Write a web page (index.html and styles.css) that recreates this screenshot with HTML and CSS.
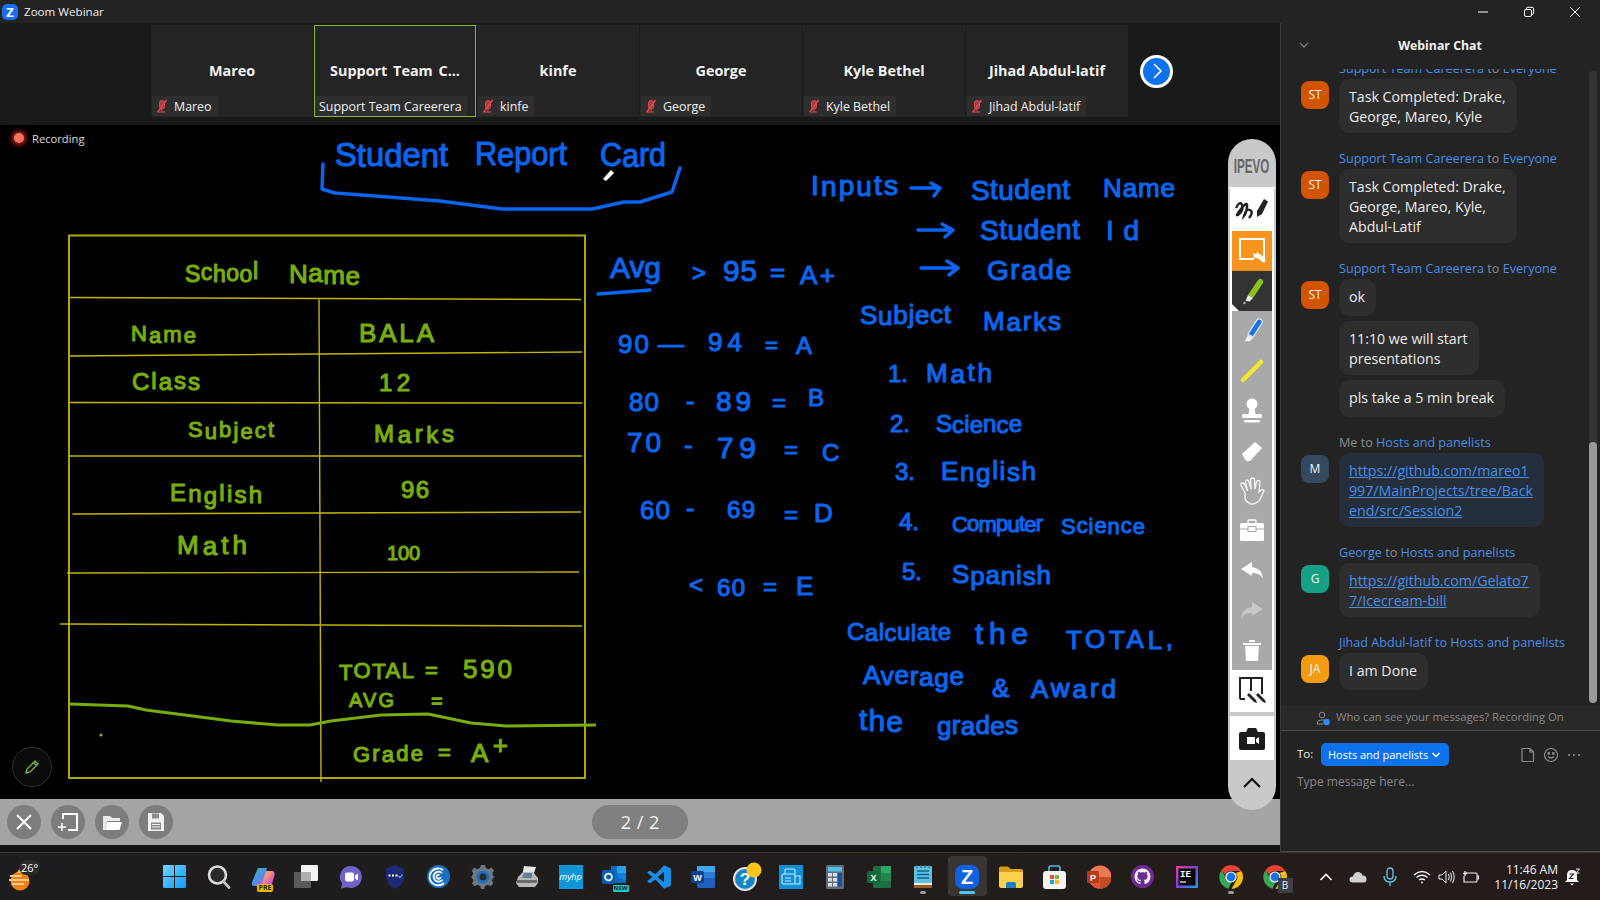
FILE: index.html
```html
<!DOCTYPE html>
<html lang="en">
<head>
<meta charset="utf-8">
<title>Zoom Webinar</title>
<link rel="stylesheet" href="styles.css">
</head>
<body>
<div class="window">
  <header class="titlebar">
    <div class="title-left">
      <span class="app-logo">Z</span>
      <span class="app-name">Zoom Webinar</span>
    </div>
    <div class="win-controls">
      <span class="win-btn"><svg width="12" height="12" viewBox="0 0 12 12"><path d="M1 6h10" stroke="#fff" stroke-width="1"/></svg></span>
      <span class="win-btn"><svg width="12" height="12" viewBox="0 0 12 12" fill="none" stroke="#fff"><rect x="1.5" y="3.5" width="7" height="7" rx="1.5"/><path d="M3.5 3V2.2q0-.9 1-.9h4.6q1.5 0 1.5 1.5v4.400q0 1-1 1H8.800"/></svg></span>
      <span class="win-btn"><svg width="12" height="12" viewBox="0 0 12 12"><path d="M1 1l10 10M11 1L1 11" stroke="#fff" stroke-width="1"/></svg></span>
    </div>
  </header>

  <div class="main">
    <section class="stage">
      <div class="strip">
        <div class="tile"><span class="tile-name">Mareo</span><span class="tile-label"><svg class="mute" viewBox="0 0 14 14"><path d="M7 1.5q2.500 0 2.500 2.500v3.500q0 2.500-2.500 2.500t-2.500-2.500V4q0-2.500 2.500-2.500zM7 10v2.500M4 13h6" fill="#a83a3f" stroke="#e0484f"/><path d="M11.500 1L2.500 13.500" stroke="#e0484f" stroke-width="1.500"/></svg>Mareo</span></div>
        <div class="tile tile-active"><span class="tile-name tile-name-spaced">Support Team C...</span><span class="tile-label tile-label-plain">Support Team Careerera</span></div>
        <div class="tile"><span class="tile-name">kinfe</span><span class="tile-label"><svg class="mute" viewBox="0 0 14 14"><path d="M7 1.5q2.500 0 2.500 2.500v3.500q0 2.500-2.500 2.500t-2.500-2.500V4q0-2.500 2.500-2.500zM7 10v2.500M4 13h6" fill="#a83a3f" stroke="#e0484f"/><path d="M11.500 1L2.500 13.500" stroke="#e0484f" stroke-width="1.500"/></svg>kinfe</span></div>
        <div class="tile"><span class="tile-name">George</span><span class="tile-label"><svg class="mute" viewBox="0 0 14 14"><path d="M7 1.5q2.500 0 2.500 2.500v3.500q0 2.500-2.500 2.500t-2.500-2.500V4q0-2.500 2.500-2.500zM7 10v2.500M4 13h6" fill="#a83a3f" stroke="#e0484f"/><path d="M11.500 1L2.500 13.500" stroke="#e0484f" stroke-width="1.500"/></svg>George</span></div>
        <div class="tile"><span class="tile-name">Kyle Bethel</span><span class="tile-label"><svg class="mute" viewBox="0 0 14 14"><path d="M7 1.5q2.500 0 2.500 2.500v3.500q0 2.500-2.500 2.500t-2.500-2.500V4q0-2.500 2.500-2.500zM7 10v2.500M4 13h6" fill="#a83a3f" stroke="#e0484f"/><path d="M11.500 1L2.500 13.500" stroke="#e0484f" stroke-width="1.500"/></svg>Kyle Bethel</span></div>
        <div class="tile"><span class="tile-name">Jihad Abdul-latif</span><span class="tile-label"><svg class="mute" viewBox="0 0 14 14"><path d="M7 1.5q2.500 0 2.500 2.500v3.500q0 2.500-2.500 2.500t-2.500-2.500V4q0-2.500 2.500-2.500zM7 10v2.500M4 13h6" fill="#a83a3f" stroke="#e0484f"/><path d="M11.500 1L2.500 13.500" stroke="#e0484f" stroke-width="1.500"/></svg>Jihad Abdul-latif</span></div>
        <button class="strip-next"><svg width="14" height="18" viewBox="0 0 14 18"><path d="M4 2l7 7-7 7" fill="none" stroke="#fff" stroke-width="1.600"/></svg></button>
      </div>

      <div class="board">
        <svg class="canvas" width="1280" height="674" viewBox="0 125 1280 674">
          <!-- table -->
          <g class="rule">
            <rect x="69" y="235.5" width="516" height="542.5" class="rule-box"/>
            <path d="M69 297.5L581 299.5M70 356L582 352M69 402.5L582.500 403M69 456H582M72.500 514L581 512M67 573L579 572M60 624L582 626M319 298.500L321 782"/>
          </g>
          <path class="stroke-green" d="M69 704L128 706L146 710L185 715L231 721L278 725H310L331 721L381 715L428 714L471 723L506 726L596 725"/>
          <circle cx="101" cy="735" r="1.500" class="dot-green"/>

          <!-- green writing -->
          <g class="ink green">
            <text class="f23" x="185" y="282" textLength="73" dy="0 -2 2 -1 1 -3">School</text>
            <text class="f26" x="289" y="283" textLength="71" dy="0 -1 2 1">Name</text>
            <text class="f22" x="131" y="341" textLength="65" dy="0 2 -1 1">Name</text>
            <text class="f26" x="359" y="342" textLength="75">BALA</text>
            <text class="f24" x="132" y="390" textLength="68" dy="0 -1 1 -1 1">Class</text>
            <text class="f24" x="379" y="391" textLength="31">12</text>
            <text class="f22" x="188" y="437" textLength="86" dy="0 2 -2 1 1 -1 -1">Subject</text>
            <text class="f24" x="374" y="442" textLength="80" dy="0 1 -1 1 -1">Marks</text>
            <text class="f24" x="170" y="501" textLength="92" dy="0 1 2 -3 1 1 0">English</text>
            <text class="f24" x="401" y="498" textLength="28">96</text>
            <text class="f26" x="177" y="554" textLength="70" dy="0 1 -1 0">Math</text>
            <text class="f20" x="387" y="560" textLength="33">100</text>
            <text class="f22" x="339" y="680" textLength="75" dy="0 -2 1 -1 0">TOTAL</text>
            <text class="f22" x="425" y="678">=</text>
            <text class="f26" x="463" y="678" textLength="49">590</text>
            <text class="f20" x="349" y="707" textLength="45">AVG</text>
            <text class="f20" x="431" y="708">=</text>
            <text class="f22" x="353" y="762" textLength="70" dy="0 -1 1 -1 0">Grade</text>
            <text class="f22" x="438" y="760">=</text>
            <text class="f26" x="471" y="762" textLength="37" dy="0 -8">A+</text>
          </g>

          <!-- blue writing -->
          <g class="ink blue">
            <text class="f34" x="335" y="166" textLength="113" lengthAdjust="spacingAndGlyphs" dy="0 1 -1 1 -1 1 -1">Student</text>
            <text class="f34" x="475" y="165" textLength="92" lengthAdjust="spacingAndGlyphs" dy="0 1 -1 0 1 -1">Report</text>
            <text class="f34" x="600" y="166" textLength="66" lengthAdjust="spacingAndGlyphs" dy="0 1 -1 0">Card</text>

            <text class="f28" x="811" y="195" textLength="87" dy="0 1 -1 1 -1 0">Inputs</text>
            <text class="f28" x="971" y="200" textLength="99" dy="0 -1 1 -1 1 -1 0">Student</text>
            <text class="f26" x="1103" y="197" textLength="72">Name</text>
            <text class="f28" x="980" y="240" textLength="100" dy="0 -1 1 -1 1 -1 0">Student</text>
            <text class="f28" x="1106" y="240" textLength="33">Id</text>
            <text class="f28" x="987" y="280" textLength="84" dy="0 -1 1 -1 1">Grade</text>
            <text class="f26" x="860" y="324" textLength="91" dy="0 1 -1 -1 1 -1 0">Subject</text>
            <text class="f26" x="983" y="330" textLength="78" dy="0 1 -1 1 -1">Marks</text>
            <text class="f24" x="888" y="382">1.</text>
            <text class="f26" x="926" y="382" textLength="66" dy="0 1 -2 1">Math</text>
            <text class="f24" x="890" y="432">2.</text>
            <text class="f24" x="936" y="432" textLength="86" dy="0 1 -1 1 -1 1 -1">Science</text>
            <text class="f24" x="895" y="480">3.</text>
            <text class="f26" x="941" y="480" textLength="95" dy="0 1 1 -3 1 1 -1">English</text>
            <text class="f24" x="899" y="530">4.</text>
            <text class="f22" x="952" y="532" textLength="91" dy="0 -1 1 -1 1 -1 1 -1">Computer</text>
            <text class="f22" x="1061" y="534" textLength="84" dy="0 -1 1 -1 1 -1 1">Science</text>
            <text class="f24" x="902" y="580">5.</text>
            <text class="f26" x="952" y="583" textLength="99" dy="0 2 -1 1 -1 1 -1">Spanish</text>
            <text class="f24" x="847" y="640" textLength="104" dy="0 1 -1 1 -1 1 -1 1 -1">Calculate</text>
            <text class="f30" x="975" y="644" textLength="53">the</text>
            <text class="f26" x="1066" y="649" textLength="107" dy="0 -1 1 -1 1 -2">TOTAL,</text>
            <text class="f26" x="863" y="684" textLength="101" dy="0 1 -1 1 1 1 -2">Average</text>
            <text class="f26" x="992" y="697">&amp;</text>
            <text class="f26" x="1031" y="698" textLength="85" dy="0 -1 1 -1 1">Award</text>
            <text class="f30" x="859" y="730" textLength="44" dy="0 1 1">the</text>
            <text class="f26" x="937" y="735" textLength="81" dy="0 -1 1 -1 1 -1">grades</text>

            <text class="f30" x="610" y="278" textLength="51" dy="0 -1 1">Avg</text>
            <text class="f24" x="692" y="281">&gt;</text>
            <text class="f30" x="723" y="281" textLength="34">95</text>
            <text class="f26" x="770" y="281">=</text>
            <text class="f26" x="800" y="284" textLength="35">A+</text>

            <text class="f26" x="618" y="353" textLength="31">90</text>
            <text class="f26" x="658" y="353" textLength="23">—</text>
            <text class="f26" x="708" y="351" textLength="34">94</text>
            <text class="f22" x="765" y="353">=</text>
            <text class="f24" x="796" y="354">A</text>

            <text class="f26" x="629" y="411" textLength="30">80</text>
            <text class="f26" x="686" y="410" textLength="12">-</text>
            <text class="f28" x="716" y="411" textLength="35">89</text>
            <text class="f24" x="772" y="411">=</text>
            <text class="f24" x="808" y="406">B</text>

            <text class="f28" x="627" y="452" textLength="34">70</text>
            <text class="f26" x="684" y="454" textLength="10">-</text>
            <text class="f30" x="717" y="458" textLength="39">79</text>
            <text class="f24" x="784" y="458">=</text>
            <text class="f24" x="822" y="461">C</text>

            <text class="f26" x="640" y="519" textLength="30">60</text>
            <text class="f26" x="686" y="517" textLength="12">-</text>
            <text class="f24" x="727" y="518" textLength="28">69</text>
            <text class="f24" x="784" y="523">=</text>
            <text class="f26" x="814" y="522">D</text>

            <text class="f24" x="689" y="593">&lt;</text>
            <text class="f24" x="717" y="596" textLength="28">60</text>
            <text class="f24" x="763" y="595">=</text>
            <text class="f26" x="796" y="595">E</text>
          </g>

          <!-- blue strokes -->
          <g class="stroke-blue">
            <path d="M323 164L322 189L335 193L388 197L440 201L502 209H592L624 202L640 202L672 192L680 168"/>
            <path d="M598 294L650 290"/>
            <path d="M911 188H938M931 183L940 188L934 196"/>
            <path d="M918 230H950M942 224L953 230L945 237"/>
            <path d="M921 268H955M947 261L958 268L949 275"/>
          </g>
          <path class="cursor-pen" d="M603 179l8-9 3 3-8 8z"/>
        </svg>

        <div class="rec"><span class="rec-dot"></span><span class="rec-text">Recording</span></div>
        <button class="pen-fab"><svg width="18" height="18" viewBox="0 0 18 18" fill="none" stroke="#6fbf3a" stroke-width="1.300"><path d="M3 15l1-4 8-8 3 3-8 8zM10.500 4.500l3 3"/></svg></button>
      </div>

      <div class="controlbar">
        <button class="round-btn"><svg width="20" height="20" viewBox="0 0 20 20"><path d="M3 3l14 14M17 3L3 17" stroke="#fff" stroke-width="2"/></svg></button>
        <button class="round-btn"><svg width="22" height="22" viewBox="0 0 22 22" fill="none" stroke="#fff" stroke-width="2"><path d="M6 8V3h14v16h-9"/><path d="M5 12v8M1 16h8" stroke-width="1.500"/></svg></button>
        <button class="round-btn"><svg width="22" height="22" viewBox="0 0 22 22"><path d="M2 5h7l2 2h8v3H6l-2 9H2z" fill="#e9e9e9"/><path d="M6 11h15l-2.500 8H4z" fill="#fff"/></svg></button>
        <button class="round-btn"><svg width="20" height="20" viewBox="0 0 20 20"><path d="M2 1h13l3 3v15H2z" fill="#f2f2f2"/><path d="M6 1.500h7v5H6z" fill="#8a8a8a"/><path d="M5 10.500h10v7H5z" fill="#8a8a8a"/><path d="M6 12.500h8M6 15h8" stroke="#f2f2f2"/></svg></button>
        <span class="page-pill">2 / 2</span>
      </div>

      <aside class="ipevo">
        <div class="ipevo-head"><span class="ipevo-logo">IPEVO</span></div>
        <div class="ipevo-body">
          <div class="tool tool-white tool-42"><svg width="36" height="30" viewBox="0 0 36 30"><path d="M2 13q4-8 6-3t-3 9 2-5 6-2-3 9q2-8 6-6t-1 8" fill="none" stroke="#222" stroke-width="2.400"/><path d="M23 16L30 4l4 2.500L28 19l-5 3z" fill="#222"/></svg></div>
          <div class="tool tool-orange"><svg width="30" height="30" viewBox="0 0 30 30"><path d="M3 24V3h24v21" fill="none" stroke="#fff" stroke-width="2"/><path d="M3 23h14" stroke="#fff" stroke-width="2"/><path d="M18 19l2-3 8 6-2 3z" fill="#fff"/><path d="M18 18l-2-1 1 5 3 0 7 5 2-3z" fill="#fff"/></svg></div>
          <div class="tool tool-dark"><svg width="30" height="32" viewBox="0 0 30 32"><path d="M11 20L21 5q2-2 4-.5t1 3.500L16 23z" fill="#8cc220"/><path d="M11 20l5 3-3.500 3.500-4-.5z" fill="#e9e9e9"/><path d="M7 26.500l2 1.500-3 1.500z" fill="#ccc"/></svg><span class="corner-mark"></span></div>
          <div class="tool-gray">
            <div class="tool"><svg width="30" height="32" viewBox="0 0 30 32"><path d="M11 19L20 5q2-2 4-.5t1 3.500L16 22z" fill="#1774e8" stroke="#dfe6ff" stroke-width="1.300"/><path d="M11 20l5 3-3.500 3.500-4-.5-1.500 2z" fill="#eee"/></svg></div>
            <div class="tool"><svg width="30" height="30" viewBox="0 0 30 30"><path d="M6 24L24 6" stroke="#f3e82a" stroke-width="4.500" stroke-linecap="round"/></svg></div>
            <div class="tool"><svg width="28" height="30" viewBox="0 0 28 30" fill="#fff"><circle cx="14" cy="8" r="5.500"/><path d="M11.500 12h5l1 6h-7z"/><rect x="4" y="18" width="20" height="4" rx="1.500"/><rect x="6" y="24" width="16" height="2.500" rx="1"/></svg></div>
            <div class="tool"><svg width="28" height="28" viewBox="0 0 28 28" fill="#fff"><path d="M4 17L17 5l7 6-12 13H8z"/></svg></div>
            <div class="tool"><svg width="28" height="30" viewBox="0 0 28 30" fill="none" stroke="#f5f5f5" stroke-width="1.300"><path d="M7 17L3 9q-.5-2 1.500-2t3 3l2 5L7.500 6q0-2 1.500-2t2 2l2 7L12.500 4q0-2 2-2t2 2l.5 9 1.500-7q.5-1.500 2-1.500t1.500 2L21 16l2-2q2-1 3 .5l-3 7q-1 3-4 5t-6 1.500q-4-1-6-5z"/></svg></div>
            <div class="tool"><svg width="26" height="24" viewBox="0 0 26 24"><path d="M9 5V3q0-1 1-1h6q1 0 1 1v2" fill="none" stroke="#fff" stroke-width="1.500"/><rect x="1" y="5" width="24" height="18" rx="1.500" fill="#fff"/><path d="M1 11h24" stroke="#aaa"/><rect x="9" y="8.500" width="8" height="5" fill="#fff" stroke="#aaa"/></svg></div>
            <div class="tool"><svg width="24" height="20" viewBox="0 0 24 20"><path d="M1 9l11-7v5q10 1 11 12-3-7-11-6v3z" fill="#fff"/></svg></div>
            <div class="tool"><svg width="24" height="20" viewBox="0 0 24 20"><path d="M23 9L12 2v5Q2 8 1 19q3-7 11-6v3z" fill="#c8c8c8"/></svg></div>
            <div class="tool"><svg width="20" height="24" viewBox="0 0 20 24" fill="#fff"><path d="M1 5h18v2H1zM7 2h6v2H7zM3 8h14l-1 15H4z"/></svg></div>
          </div>
          <div class="tool tool-white tool-42"><svg width="32" height="32" viewBox="0 0 32 32"><path d="M4 24V3h22v16M15 3v13" fill="none" stroke="#222" stroke-width="2"/><path d="M4 24h5" fill="none" stroke="#222" stroke-width="2"/><path d="M11 20l2-2 7 7 1 3-3-1z" fill="#222"/><path d="M20 20l2-2 7 7 1 3-3-1z" fill="#222"/></svg></div>
          <div class="ipevo-sep"></div>
          <div class="tool tool-white tool-44"><svg width="28" height="24" viewBox="0 0 28 24"><path d="M1 8q0-2 2-2h5l2-4h8l2 4h5q2 0 2 2v14q0 2-2 2H3q-2 0-2-2z" fill="#1c1c1c"/><rect x="9" y="11" width="8" height="7" fill="#fff"/><path d="M18 13l3-2v7l-3-2z" fill="#fff"/></svg></div>
        </div>
        <div class="ipevo-foot"><svg width="20" height="12" viewBox="0 0 20 12"><path d="M2 10l8-8 8 8" fill="none" stroke="#111" stroke-width="2.200"/></svg></div>
      </aside>

      <div class="band"></div>
    </section>

    <aside class="chat">
      <div class="chat-head">
        <svg class="chat-caret" width="10" height="8" viewBox="0 0 10 8"><path d="M1 2l4 4 4-4" fill="none" stroke="#777" stroke-width="1.300"/></svg>
        <span class="chat-title">Webinar Chat</span>
      </div>
      <div class="chat-scroll">
        <div class="chat-list">
          <div class="msg msg-first">
            <div class="msg-from"><a>Support Team Careerera</a> <span>to</span> <a>Everyone</a></div>
            <div class="avatar av-orange">ST</div>
            <div class="bubbles"><div class="bubble">Task Completed: Drake,<br>George, Mareo, Kyle</div></div>
          </div>
          <div class="msg">
            <div class="msg-from"><a>Support Team Careerera</a> <span>to</span> <a>Everyone</a></div>
            <div class="avatar av-orange">ST</div>
            <div class="bubbles"><div class="bubble">Task Completed: Drake,<br>George, Mareo, Kyle,<br>Abdul-Latif</div></div>
          </div>
          <div class="msg">
            <div class="msg-from"><a>Support Team Careerera</a> <span>to</span> <a>Everyone</a></div>
            <div class="avatar av-orange">ST</div>
            <div class="bubbles">
              <div class="bubble">ok</div>
              <div class="bubble">11:10 we will start<br>presentations</div>
              <div class="bubble">pls take a 5 min break</div>
            </div>
          </div>
          <div class="msg">
            <div class="msg-from"><span>Me to</span> <a>Hosts and panelists</a></div>
            <div class="avatar av-slate">M</div>
            <div class="bubbles"><div class="bubble bubble-me"><a class="link">https://github.com/mareo1<br>997/MainProjects/tree/Back<br>end/src/Session2</a></div></div>
          </div>
          <div class="msg">
            <div class="msg-from"><a>George</a> <span>to</span> <a>Hosts and panelists</a></div>
            <div class="avatar av-teal">G</div>
            <div class="bubbles"><div class="bubble"><a class="link">https://github.com/Gelato7<br>7/Icecream-bill</a></div></div>
          </div>
          <div class="msg">
            <div class="msg-from"><a>Jihad Abdul-latif to Hosts and panelists</a></div>
            <div class="avatar av-amber">JA</div>
            <div class="bubbles"><div class="bubble">I am Done</div></div>
          </div>
        </div>
        <div class="scrollbar"><span class="scroll-thumb"></span></div>
      </div>
      <div class="notice">
        <svg width="15" height="15" viewBox="0 0 15 15"><circle cx="6" cy="4" r="2.800" fill="none" stroke="#8a8a8a"/><path d="M1 13q0-4 4-4h3" fill="none" stroke="#8a8a8a"/><path d="M1 13h6" stroke="#8a8a8a"/><circle cx="10.500" cy="11" r="3.200" fill="#2d8cff"/></svg>
        <span class="notice-text">Who can see your messages? Recording On</span>
      </div>
      <div class="composer">
        <div class="to-row">
          <span class="to-label">To:</span>
          <button class="to-btn">Hosts and panelists<svg width="10" height="8" viewBox="0 0 10 8"><path d="M1.500 2l3.500 3.500L8.500 2" fill="none" stroke="#fff" stroke-width="1.500"/></svg></button>
          <div class="to-icons">
            <svg width="16" height="16" viewBox="0 0 16 16" fill="none" stroke="#8d8d8d" stroke-width="1.200"><path d="M3 1.500h7L13.500 5v8.500q0 1-1 1h-9.500q-1 0-1-1v-11q0-1 1-1zM10 1.500V5h3.500"/></svg>
            <svg width="16" height="16" viewBox="0 0 16 16" fill="none" stroke="#8d8d8d" stroke-width="1.200"><circle cx="8" cy="8" r="6.500"/><circle cx="5.700" cy="6.500" r=".8" fill="#8d8d8d"/><circle cx="10.300" cy="6.500" r=".8" fill="#8d8d8d"/><path d="M5 9.500q3 3 6 0"/></svg>
            <svg width="16" height="16" viewBox="0 0 16 16" fill="#8d8d8d"><circle cx="3" cy="8" r="1"/><circle cx="8" cy="8" r="1"/><circle cx="13" cy="8" r="1"/></svg>
          </div>
        </div>
        <div class="placeholder">Type message here...</div>
      </div>
    </aside>
  </div>
</div>

<footer class="taskbar">
  <div class="weather">
    <svg width="26" height="26" viewBox="0 0 26 26"><circle cx="11" cy="16" r="9.500" fill="#f0820f"/><path d="M11 2l3 6H8z" fill="#f6b73c"/><path d="M1 11h12M0 15h20M3 19h12" stroke="#f5c98a" stroke-width="2.200"/></svg>
    <span class="temp">26°</span>
  </div>
  <div class="apps">
    <span class="app"><svg width="23" height="23" viewBox="0 0 23 23"><defs><linearGradient id="wg" x1="0" y1="0" x2="1" y2="1"><stop offset="0" stop-color="#6fd3ff"/><stop offset="1" stop-color="#0f9bff"/></linearGradient></defs><path fill="url(#wg)" d="M1 0h10v11H0V1q0-1 1-1zM12 0h10q1 0 1 1v10H12zM0 12h11v11H1q-1 0-1-1zM12 12h11v10q0 1-1 1H12z"/></svg></span>
    <span class="app"><svg width="24" height="24" viewBox="0 0 24 24"><circle cx="10.500" cy="10" r="8.500" fill="#2a2a2a" stroke="#dcdcdc" stroke-width="2.600"/><path d="M16.500 16.500l5.500 6" stroke="#c8c8c8" stroke-width="2.600" stroke-linecap="round"/></svg></span>
    <span class="app app-badged"><svg width="24" height="20" viewBox="0 0 24 20"><defs><linearGradient id="cg" x1="0" y1="0" x2="1" y2="1"><stop offset="0" stop-color="#3bc78b"/><stop offset=".5" stop-color="#4a90f0"/><stop offset="1" stop-color="#d552c8"/></linearGradient><linearGradient id="cg2" x1="0" y1="0" x2="1" y2="1"><stop offset="0" stop-color="#f7d23a"/><stop offset=".6" stop-color="#e86aa5"/><stop offset="1" stop-color="#8a54e8"/></linearGradient></defs><path fill="url(#cg)" d="M7 1h9l-5 18H3q-3 0-2-4z"/><path fill="url(#cg2)" d="M15 4h6q3 0 2.500 4L21 17q-.5 2-3 2h-8z"/></svg><span class="badge badge-pre">PRE</span></span>
    <span class="app"><svg width="25" height="24" viewBox="0 0 25 24"><rect x="7" y="0" width="17" height="16" rx="1" fill="#f4f4f4"/><rect x="0" y="7" width="17" height="16" rx="1" fill="#5a5a5a"/><rect x="7" y="7" width="10" height="9" fill="#b0b0b0"/></svg></span>
    <span class="app"><svg width="24" height="24" viewBox="0 0 24 24"><path d="M12 1a11 11 0 11-4 21.300L2 23.500l1-5A11 11 0 0112 1z" fill="#6f62c8"/><rect x="6" y="7.500" width="9" height="9" rx="2" fill="#fff"/><path d="M16 10.500l3-2v7l-3-2z" fill="#fff"/></svg></span>
    <span class="app"><svg width="20" height="24" viewBox="0 0 20 24"><path d="M10 0l9 3.500V12q0 7-9 12-9-5-9-12V3.500z" fill="#1b2a72"/><path d="M3.500 10.500h2M7 10.500h2M10.500 10.500h2" stroke="#fff" stroke-width="1.800"/><path d="M13.500 11l1.500 1.500 2.500-3" fill="none" stroke="#6fb8ff" stroke-width="1.100"/></svg></span>
    <span class="app"><svg width="23" height="23" viewBox="0 0 23 23"><circle cx="11.500" cy="11.500" r="11.500" fill="#1d6fc2"/><g fill="none" stroke="#fff" stroke-width="1.800"><path d="M17 18a8.500 8.500 0 11-1-13"/><path d="M15.500 14.800A5 5 0 1115 8"/><path d="M13.500 12a2 2 0 11-1-2"/></g></svg></span>
    <span class="app"><svg width="24" height="24" viewBox="0 0 24 24"><path d="M10 0h4l.8 3 2.800 1.200 2.700-1.600 2.800 2.800-1.600 2.700L22 11l2 1-2 1-1.200 2.800 1.600 2.700-2.800 2.800-2.700-1.600-2.800 1.200-.9 3H10l-.8-3-2.800-1.200-2.700 1.600-2.800-2.800 1.600-2.700L1 13 0 12l1-1 1.200-2.800L.6 5.400l2.800-2.800 2.700 1.600L9 3z" fill="#6d7882"/><circle cx="12" cy="12" r="6.500" fill="#1d6fc2"/><circle cx="12" cy="12" r="3.500" fill="#2b2b2b"/></svg></span>
    <span class="app"><svg width="24" height="24" viewBox="0 0 24 24"><path d="M9 1l12 1-3 9H7z" fill="#e4e4e4"/><path d="M3 12l5-5h10l5 6v5l-3 4H4l-3-4z" fill="#b8b8b8"/><path d="M2 15h20v3H2z" fill="#6a6a6a"/><path d="M9 8h8v5H7z" fill="#5d7f99"/></svg></span>
    <span class="app"><span class="tile-hp">myhp</span></span>
    <span class="app app-badged"><svg width="25" height="22" viewBox="0 0 25 22"><path d="M9 0h10q5 0 5 5v12H9z" fill="#0a6cc4"/><path d="M15 0h9v7h-9z" fill="#2aa0e8"/><path d="M16 7h8v8l-8-4z" fill="#0f87d8"/><rect x="0" y="4" width="13" height="14" rx="2" fill="#0a5db0"/><circle cx="6.500" cy="11" r="3.400" fill="none" stroke="#fff" stroke-width="1.800"/></svg><span class="badge badge-new">NEW</span></span>
    <span class="app"><svg width="24" height="24" viewBox="0 0 100 100"><path d="M71 99l25-12a7 7 0 004-7V20a7 7 0 00-4-7L71 1 35 40 13 24l-9 4a4 4 0 000 7l19 15L4 65a4 4 0 000 7l9 4 22-16z" fill="#1a8ee6"/><path d="M71 28L44 50l27 22z" fill="#211f1f"/></svg></span>
    <span class="app"><svg width="24" height="24" viewBox="0 0 24 24"><rect x="6" y="1" width="18" height="22" rx="1.500" fill="#1f5fbf"/><path d="M6 1h18v6H6z" fill="#41a5ee"/><path d="M6 7h18v6H6z" fill="#2b7cd3"/><rect x="0" y="6" width="13" height="12" rx="1.500" fill="#103f91"/><text class="glyph-w" x="6.500" y="15.500">W</text></svg></span>
    <span class="app"><svg width="30" height="30" viewBox="0 0 30 30"><circle cx="13" cy="17" r="11" fill="#1287c8" stroke="#e4e4e4" stroke-width="2"/><text class="glyph-q" x="13" y="23">?</text><circle cx="22" cy="8" r="7.500" fill="#fcc419"/></svg></span>
    <span class="app"><svg width="24" height="24" viewBox="0 0 24 24"><rect width="24" height="24" fill="#0e8fd6"/><g fill="none" stroke="#cfeaff" stroke-width="1.100"><rect x="3" y="9" width="13" height="10" rx="1.500"/><path d="M6 9V5q0-1 1-1h8q1 0 1 1v4M16 11h5v8h-5M6 13h6M6 16h6"/></g></svg></span>
    <span class="app"><svg width="18" height="24" viewBox="0 0 18 24"><rect width="18" height="24" rx="1.500" fill="#5f6d7a"/><rect x="2" y="2" width="14" height="4.500" fill="#4fc4e8"/><g fill="#d9dde0"><rect x="2" y="8" width="4" height="3.500"/><rect x="7" y="8" width="4" height="3.500"/><rect x="2" y="13" width="4" height="3.500"/><rect x="7" y="13" width="4" height="3.500"/><rect x="2" y="18" width="4" height="3.500"/><rect x="7" y="18" width="4" height="3.500"/></g><rect x="12" y="8" width="4" height="13.500" fill="#1d4f9c"/></svg></span>
    <span class="app"><svg width="24" height="24" viewBox="0 0 24 24"><rect x="6" y="1" width="18" height="22" rx="1.500" fill="#1d6f42"/><path d="M14 1h10v7H14z" fill="#33a56a"/><path d="M14 8h10v8H14z" fill="#21874f"/><rect x="0" y="6" width="13" height="12" rx="1.500" fill="#0f6b3b"/><text class="glyph-w" x="6.500" y="15.500">X</text></svg></span>
    <span class="app app-pip"><svg width="18" height="24" viewBox="0 0 18 24"><rect y="1" width="18" height="22" rx="1" fill="#5cc0e0"/><path d="M0 20h18v3H0z" fill="#9a5a1e"/><path d="M0 18h18v2H0z" fill="#f2e9d5"/><path d="M3 6h12M3 9.500h12M3 13h12" stroke="#145f85" stroke-width="1.500"/><path d="M3 0v3M7 0v3M11 0v3M15 0v3" stroke="#2a6c90" stroke-width="1.200"/></svg><span class="pip"></span></span>
    <span class="app app-active"><svg width="24" height="24" viewBox="0 0 24 24"><rect width="24" height="24" rx="8" fill="#1261e0"/><text class="glyph-z" x="12" y="18.500">Z</text></svg><span class="pip pip-active"></span></span>
    <span class="app"><svg width="24" height="22" viewBox="0 0 24 22"><path d="M0 2q0-1.500 1.500-1.500H9l2.500 2.500h11Q24 3 24 4.500V8H0z" fill="#d79c16"/><path d="M0 6h24v14q0 2-2 2H2q-2 0-2-2z" fill="#fbd04e"/><path d="M7 18q0-2 2-2h6q2 0 2 2v4H7z" fill="#1d7fc4"/></svg></span>
    <span class="app"><svg width="23" height="24" viewBox="0 0 23 24"><path d="M6 7V3q0-2 2-2h7q2 0 2 2v4" fill="none" stroke="#4fc0e8" stroke-width="1.600"/><rect y="6" width="23" height="18" rx="3" fill="#f4f4f4"/><rect x="7" y="10" width="4" height="4" fill="#e8532b"/><rect x="12" y="10" width="4" height="4" fill="#7cb82f"/><rect x="7" y="15" width="4" height="4" fill="#1fa0e8"/><rect x="12" y="15" width="4" height="4" fill="#fbb91f"/></svg></span>
    <span class="app"><svg width="24" height="24" viewBox="0 0 24 24"><circle cx="13" cy="12" r="11.500" fill="#ee7a55"/><path d="M13 12H24.500A11.500 11.500 0 0113 23.500z" fill="#c64a24"/><path d="M13 12v11.500A11.500 11.500 0 011.500 12z" fill="#d9582f"/><rect x="0" y="6" width="12" height="12" rx="1.500" fill="#b93a18"/><text class="glyph-w" x="6" y="15.500">P</text></svg></span>
    <span class="app"><svg width="23" height="23" viewBox="0 0 23 23"><circle cx="11.500" cy="11.500" r="11.500" fill="#6e2b93"/><g transform="translate(3.500 3.500)"><path fill="#f2f2f2" d="M8 0C3.580 0 0 3.580 0 8c0 3.540 2.290 6.530 5.470 7.590.4.070.55-.17.55-.38 0-.19-.01-.82-.01-1.490-2.010.37-2.530-.49-2.690-.94-.09-.23-.48-.94-.82-1.130-.28-.15-.68-.52-.01-.53.63-.01 1.080.58 1.230.82.720 1.210 1.870.87 2.330.66.070-.52.280-.87.510-1.070-1.780-.2-3.640-.89-3.640-3.950 0-.87.310-1.590.820-2.150-.08-.2-.36-1.020.080-2.120 0 0 .67-.21 2.200.82.640-.18 1.320-.27 2-.27s1.360.09 2 .27c1.530-1.040 2.200-.82 2.200-.82.440 1.100.160 1.920.080 2.120.510.560.820 1.270.820 2.150 0 3.070-1.870 3.750-3.650 3.950.290.25.540.730.540 1.480 0 1.070-.01 1.930-.01 2.200 0 .21.150.46.550.38A8.013 8.013 0 0016 8c0-4.420-3.580-8-8-8z"/></g></svg></span>
    <span class="app"><svg width="22" height="22" viewBox="0 0 22 22"><defs><linearGradient id="ig" x1="0" y1="0" x2="1" y2="1"><stop offset="0" stop-color="#f0389a"/><stop offset=".5" stop-color="#7a42e0"/><stop offset="1" stop-color="#10a4f0"/></linearGradient></defs><rect width="22" height="22" fill="url(#ig)"/><rect x="2.500" y="2.500" width="17" height="17" fill="#0a0a0a"/><text class="glyph-ie" x="4" y="11">IE</text><path d="M4 16h6" stroke="#fff" stroke-width="1.200"/></svg></span>
    <span class="app app-pip"><svg class="chrome" width="24" height="24" viewBox="0 0 24 24"><path d="M12 0a12 12 0 0110.400 6H12a6 6 0 00-5.700 4L2.400 5.200A12 12 0 0112 0z" fill="#e94335"/><path d="M22.400 6A12 12 0 0112.500 24l4.700-8.500A6 6 0 0016.500 8z" fill="#fbbc05"/><path d="M2.400 5.200l4.900 8.400a6 6 0 005.200 3.400L9.500 23.700A12 12 0 012.400 5.200z" fill="#34a853"/><circle cx="12" cy="12" r="5.600" fill="#fff"/><circle cx="12" cy="12" r="4.400" fill="#1a73e8"/></svg><span class="pip"></span></span>
    <span class="app app-badged"><svg class="chrome" width="24" height="24" viewBox="0 0 24 24"><path d="M12 0a12 12 0 0110.400 6H12a6 6 0 00-5.700 4L2.400 5.200A12 12 0 0112 0z" fill="#e94335"/><path d="M22.400 6A12 12 0 0112.500 24l4.700-8.500A6 6 0 0016.500 8z" fill="#fbbc05"/><path d="M2.400 5.200l4.900 8.400a6 6 0 005.200 3.400L9.500 23.700A12 12 0 012.400 5.200z" fill="#34a853"/><circle cx="12" cy="12" r="5.600" fill="#fff"/><circle cx="12" cy="12" r="4.400" fill="#1a73e8"/></svg><span class="badge badge-b">B</span></span>
  </div>
  <div class="tray">
    <span class="tray-item"><svg width="14" height="10" viewBox="0 0 14 10"><path d="M1.500 8L7 2.500 12.500 8" fill="none" stroke="#fff" stroke-width="1.600"/></svg></span>
    <span class="tray-item tray-gap"><svg width="18" height="12" viewBox="0 0 18 12"><path d="M4 11.500q-3.500 0-3.500-3T4 5.500Q5 1 9 1q3.500 0 4.500 3.500 4-.5 4 3.500t-3.500 3.500z" fill="#d0d0d0"/></svg></span>
    <span class="tray-item tray-gap"><svg width="14" height="20" viewBox="0 0 14 20" fill="none" stroke="#63c8e8" stroke-width="1.300"><rect x="4" y="1" width="6" height="11" rx="3"/><path d="M1 9q0 6 6 6t6-6M7 15v4"/></svg></span>
    <span class="tray-item tray-gap"><svg width="18" height="14" viewBox="0 0 18 14" fill="none" stroke="#f2f2f2" stroke-width="1.300"><path d="M1 5q8-7 16 0M3.500 7.500q5.500-4.500 11 0M6 10q3-2 6 0"/><circle cx="9" cy="12.500" r="1" fill="#f2f2f2" stroke="none"/></svg></span>
    <span class="tray-item"><svg width="17" height="14" viewBox="0 0 17 14" fill="none" stroke="#f2f2f2" stroke-width="1"><path d="M1 5h3l4-4v12L4 9H1zM10.500 4q1.500 3 0 6M12.500 2.500q2.500 4.500 0 9M14.500 1q3.500 6 0 12"/></svg></span>
    <span class="tray-item"><svg width="17" height="14" viewBox="0 0 17 14" fill="none" stroke="#f2f2f2" stroke-width="1.100"><path d="M4 3h10q1 0 1 1v7q0 1-1 1H2V6M15 6h1.500v3H15"/><path d="M3 1v5M1 3.500h4" stroke-width="1.300"/></svg></span>
    <div class="clock"><span>11:46 AM</span><span>11/16/2023</span></div>
    <span class="tray-bell"><svg width="18" height="18" viewBox="0 0 18 18"><path d="M8 2q5 0 5 5v5l2 2H1l2-2V7q0-5 5-5z" fill="#f2f2f2"/><path d="M6 15.500h4l-2 2z" fill="#f2f2f2"/><path d="M5.500 6h4l-4 4.500h4" fill="none" stroke="#222" stroke-width="1.100"/><path d="M12 1h3.500L12 5h3.500" fill="none" stroke="#f2f2f2" stroke-width="1"/></svg></span>
  </div>
</footer>
</body>
</html>
```

FILE: styles.css
```css
* { box-sizing: border-box; }
html, body { margin: 0; padding: 0; }
body {
  width: 1600px;
  height: 900px;
  overflow: hidden;
  display: flex;
  flex-direction: column;
  background: #000;
  font-family: "Open Sans", "Noto Sans", "Liberation Sans", sans-serif;
  color: #fff;
}
button { border: 0; padding: 0; font: inherit; color: inherit; }
svg { display: block; }

.window { flex: 0 0 852px; display: flex; flex-direction: column; min-height: 0; }

/* title bar */
.titlebar {
  flex: 0 0 23px;
  background: #232323;
  display: flex;
  align-items: center;
  justify-content: space-between;
  padding-right: 2px;
}
.title-left { display: flex; align-items: center; padding-left: 2px; }
.app-logo {
  width: 16px; height: 16px;
  border-radius: 5px;
  background: #1a6ff0;
  font-size: 13px; font-weight: 700; line-height: 16px;
  text-align: center;
  margin-right: 6px;
}
.app-name { font-size: 11.600px; color: #eee; }
.win-controls { display: flex; }
.win-btn { width: 46px; height: 20px; display: flex; align-items: center; justify-content: center; }

.main { flex: 1; display: flex; min-height: 0; }

/* stage */
.stage { position: relative; flex: 0 0 1280px; display: flex; flex-direction: column; }
.strip {
  flex: 0 0 102px;
  background: #1a1a1a;
  display: flex;
  gap: 1px;
  padding: 2px 0 8px 151px;
}
.tile { position: relative; width: 162px; background: #242424; display: flex; align-items: center; justify-content: center; padding-bottom: 2px; }
.tile-active { border: 1px solid #8fb52c; }
.tile-name { font-size: 14.400px; font-weight: 700; color: #f2f2f2; }
.tile-name-spaced { word-spacing: 2px; }
.tile-label {
  position: absolute;
  left: 1px; bottom: 1px;
  height: 20px;
  padding: 0 6px 0 3px;
  display: flex; align-items: center;
  background: #2e2e2e;
  font-size: 12.400px;
  color: #f0f0f0;
  white-space: nowrap;
}
.tile-label-plain { left: 0; bottom: 0; padding: 0 5px 0 4px; }
.mute { width: 14px; height: 14px; margin-right: 5px; }
.strip-next {
  align-self: center;
  margin: 0 0 0 11px;
  width: 33px; height: 33px;
  border-radius: 50%;
  background: #0e72ed;
  border: 3px solid #fff;
  display: flex; align-items: center; justify-content: center;
}

/* whiteboard */
.board { position: relative; flex: 0 0 674px; background: #000; }
.canvas { display: block; }
.rule { fill: none; stroke: #c4b400; stroke-width: 1.400; }
.rule-box { stroke: #b4a600; stroke-width: 2; }
.stroke-green { fill: none; stroke: #78ae0c; stroke-width: 3; stroke-linejoin: round; }
.dot-green { fill: #8ab820; }
.stroke-blue { fill: none; stroke: #0a66f0; stroke-width: 3.500; stroke-linejoin: round; stroke-linecap: round; }
.cursor-pen { fill: #fff; stroke: #999; stroke-width: .6; }

.ink { font-family: "Liberation Sans", sans-serif; stroke-width: 1.100; stroke-linejoin: round; }
.ink.green { fill: #78ae0c; stroke: #78ae0c; }
.ink.blue { fill: #0a66f0; stroke: #0a66f0; }
.f20 { font-size: 20px; }
.f22 { font-size: 22px; }
.f23 { font-size: 23px; }
.f24 { font-size: 24px; }
.f26 { font-size: 26px; }
.f28 { font-size: 28px; }
.f30 { font-size: 30px; }
.f34 { font-size: 34px; }

.rec { position: absolute; left: 14px; top: 6px; height: 14px; display: flex; align-items: center; }
.rec-dot {
  width: 10px; height: 10px;
  border-radius: 50%;
  background: #f8705f;
  box-shadow: 0 0 5px 2px #b52a20;
  margin-right: 8px;
}
.rec-text { font-size: 11.200px; color: #ddd; }
.pen-fab {
  position: absolute;
  left: 12px; top: 622px;
  width: 40px; height: 40px;
  border-radius: 50%;
  background: #0b0b0b;
  border: 1px solid #333;
  display: flex; align-items: center; justify-content: center;
}

/* bottom whiteboard bar */
.controlbar {
  flex: 0 0 46px;
  background: #a5a3a5;
  display: flex;
  align-items: center;
  gap: 10px;
  padding-left: 7px;
}
.round-btn {
  width: 34px; height: 34px;
  border-radius: 50%;
  background: #7d7d7d;
  display: flex; align-items: center; justify-content: center;
}
.page-pill {
  margin-left: 409px;
  width: 96px; height: 34px;
  border-radius: 17px;
  background: #808080;
  font-size: 18px;
  word-spacing: 1px;
  line-height: 34px;
  text-align: center;
  color: #f2f2f2;
}
.band { flex: 0 0 7px; background: #141414; }

/* IPEVO side toolbar */
.ipevo {
  position: absolute;
  left: 1228px; top: 116px;
  width: 48px; height: 671px;
  display: flex; flex-direction: column;
}
.ipevo-head {
  flex: 0 0 48px;
  background: #c9c8ca;
  border-radius: 24px 24px 0 0;
  padding-top: 17px;
  display: flex;
  justify-content: center;
}
.ipevo-logo {
  display: block;
  font-family: "Liberation Sans", sans-serif;
  font-weight: 700;
  font-size: 20px;
  line-height: 20px;
  color: #666;
  transform: scaleX(.58);
}
.ipevo-body {
  flex: 1;
  display: flex; flex-direction: column;
  background: #fff;
  border-top: 2px solid #fff;
  border-left: 2px solid #c9c8ca;
  border-right: 2px solid #c9c8ca;
  padding: 0 2px;
}
.tool { position: relative; height: 39.900px; display: flex; align-items: center; justify-content: center; }
.tool-white { background: #fff; }
.tool-42 { height: 42px; }
.tool-44 { height: 44px; }
.tool-orange { height: 40px; background: #f7931e; }
.tool-dark { height: 40px; background: #333; }
.corner-mark {
  position: absolute; left: 0; bottom: 0;
  border-left: 7px solid #fff;
  border-top: 7px solid transparent;
}
.tool-gray { flex: 0 0 359px; background: #a9a9a9; }
.ipevo-sep { flex: 0 0 4px; background: #c9c8ca; margin: 0 -2px; }
.ipevo-foot {
  flex: 0 0 50px;
  background: #c9c8ca;
  border-radius: 0 0 24px 24px;
  display: flex; align-items: center; justify-content: center;
  padding-bottom: 5px;
}

/* chat */
.chat {
  flex: 0 0 320px;
  display: flex; flex-direction: column;
  background: #232323;
  border-left: 1px solid #3c3c3c;
  min-height: 0;
}
.chat-head { position: relative; flex: 0 0 46px; display: flex; align-items: center; justify-content: center; padding: 0 0 2px; }
.chat-caret { position: absolute; left: 18px; top: 18px; }
.chat-title { font-size: 12.300px; font-weight: 700; color: #f2f2f2; margin-right: 1px; }
.chat-scroll { position: relative; flex: 0 0 637px; overflow: hidden; padding-left: 20px; }
.chat-list { margin-top: -26px; }
.msg {
  display: grid;
  grid-template-columns: 28px 1fr;
  column-gap: 10px;
  margin-top: 16px;
}
.msg-from {
  grid-column: 2;
  font-size: 12.600px;
  line-height: 20px;
  height: 18px;
  margin-bottom: 2px;
  white-space: nowrap;
  color: #8d8d8d;
}
.msg-from a { color: #4a8fe8; }
.avatar {
  grid-column: 1;
  width: 28px; height: 28px;
  margin-top: 2px;
  border-radius: 8px;
  font-size: 12px;
  line-height: 28px;
  text-align: center;
  color: #f5f5f5;
}
.av-orange { background: #d35400; }
.av-slate { background: #34495e; }
.av-teal { background: #16a085; }
.av-amber { background: #f39c12; }
.bubbles { display: flex; flex-direction: column; align-items: flex-start; gap: 5px; }
.bubble {
  min-height: 37px;
  padding: 8px 11px 6px 10px;
  border-radius: 11px;
  background: #2e2e2e;
  font-size: 14.200px;
  line-height: 20px;
  color: #ececec;
  white-space: nowrap;
}
.bubble-me { background: #252e3b; }
.link { color: #4a8fe8; text-decoration: underline; }
.scrollbar {
  position: absolute;
  left: 308px; top: 2px; bottom: 3px;
  width: 8px;
  border-radius: 4px;
  background: #333;
}
.scroll-thumb {
  position: absolute;
  left: 0; right: 0; top: 371px; bottom: 0;
  border-radius: 4px;
  background: #9a9a9a;
}
.notice {
  flex: 0 0 24px;
  display: flex; align-items: center;
  padding-left: 35px;
  gap: 5px;
  background: #292929;
  font-size: 11.300px;
  color: #8a8a8a;
}
.notice-text { margin-top: -3px; }
.composer {
  flex: 1;
  border-top: 1px solid #454545;
  border-bottom: 1px solid #4a4a4a;
  padding: 12px 18px 0 16px;
}
.to-row { display: flex; align-items: center; height: 23px; }
.to-label { width: 24px; font-size: 11.500px; color: #eee; margin-top: -3px; }
.to-btn {
  width: 128px; height: 23px;
  display: flex; align-items: center; gap: 3px;
  padding-left: 7px;
  background: #0e72ed;
  border-radius: 5px;
  font-size: 11px;
  color: #fff;
  white-space: nowrap;
}
.to-icons { margin-left: auto; display: flex; gap: 7px; }
.placeholder { margin-top: 7px; font-size: 12px; line-height: 18px; color: #888; }

/* taskbar */
.taskbar {
  flex: 0 0 48px;
  display: flex;
  border-top: 1px solid #383838;
  background: linear-gradient(90deg, #1d1c1f, #231d1a 70%, #241c1a);
}
.weather { position: relative; flex: 0 0 152.500px; padding: 12px 0 0 9px; }
.temp {
  position: absolute;
  left: 19px; top: 7px;
  padding: 0 2px;
  border-radius: 8px;
  background: #2b2929;
  font-size: 11px;
  line-height: 15px;
}
.apps { display: flex; }
.app { position: relative; width: 44px; height: 47px; display: flex; align-items: center; justify-content: center; }
.app-active::before {
  content: "";
  position: absolute;
  left: 3px; right: 2px; top: 3px; bottom: 4px;
  border-radius: 4px;
  background: #393533;
}
.app-active svg { position: relative; }
.pip {
  position: absolute;
  left: 19px; bottom: 6px;
  width: 6px; height: 3px;
  border-radius: 2px;
  background: #9a9a9a;
}
.pip-active { left: 14px; width: 16px; background: #4cc2ff; }
.badge {
  position: absolute;
  font-weight: 700;
  white-space: nowrap;
}
.badge-pre {
  left: 16px; bottom: 8px;
  padding: 0 2px;
  border-radius: 2px;
  background: #f5b800;
  color: #222;
  font-size: 7px; line-height: 8px;
}
.badge-new {
  left: 20px; bottom: 8px;
  padding: 0 1px;
  border-radius: 1px;
  background: #1fc8c8;
  color: #123;
  font-size: 6px; line-height: 7px;
}
.badge-b {
  left: 25px; bottom: 7px;
  width: 15px; height: 15px;
  background: #3c3f44;
  color: #eee;
  font-size: 10px; line-height: 15px;
  text-align: center;
  font-weight: 400;
}
.tile-hp {
  width: 24px; height: 24px;
  background: #0e96d8;
  font-size: 9px; font-style: italic;
  line-height: 24px;
  text-align: center;
}
.glyph-w { font: 700 9px "Liberation Sans", sans-serif; fill: #fff; text-anchor: middle; }
.glyph-q { font: 700 17px "Liberation Sans", sans-serif; fill: #fff; text-anchor: middle; }
.glyph-z { font: 700 20px "Liberation Sans", sans-serif; fill: #fff; text-anchor: middle; }
.glyph-ie { font: 700 9px "Liberation Mono", monospace; fill: #fff; }

.tray { flex: 1; display: flex; align-items: center; padding-left: 17.500px; }
.tray-item { width: 24px; display: flex; align-items: center; justify-content: center; }
.tray-gap { margin-left: 8px; }
.clock {
  margin-left: auto;
  display: flex; flex-direction: column; align-items: flex-end;
  font-size: 12px; line-height: 15px;
  color: #f2f2f2;
}
.tray-bell { margin: 0 18px 0 6px; }
```
